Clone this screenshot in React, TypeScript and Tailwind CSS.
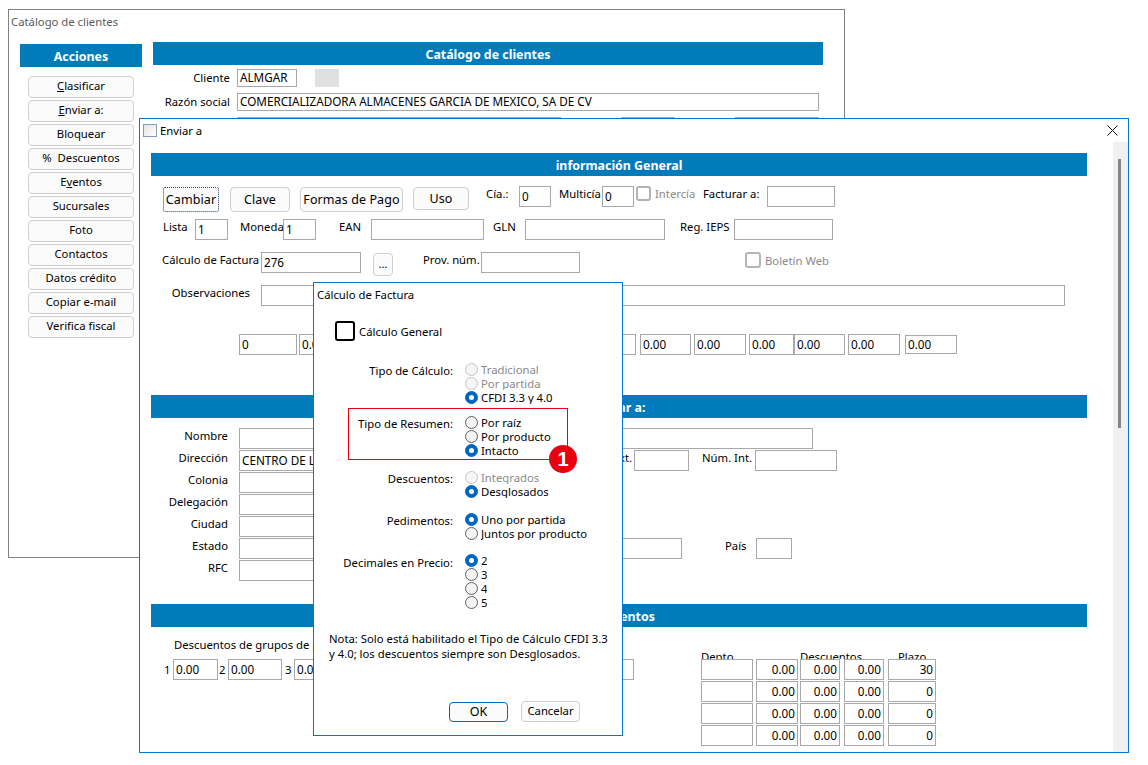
import React from "react";

function Field({ className = "", right, children }: { className?: string; right?: boolean; children?: React.ReactNode }) {
  return (
    <div
      className={`shrink-0 h-[21px] border border-[#a8a8a8] bg-white px-[2px] text-[11.7px] leading-[19px] whitespace-nowrap overflow-hidden ${right ? "text-right" : ""} ${className}`}
    >
      {children}
    </div>
  );
}

function Label({ className = "", children }: { className?: string; children: React.ReactNode }) {
  return <div className={`shrink-0 h-[16px] leading-[16px] whitespace-nowrap ${className}`}>{children}</div>;
}

function Bar({ children }: { children?: React.ReactNode }) {
  return (
    <div className="ml-[11px] w-[936px] h-[23px] overflow-hidden bg-[#027bbb] text-white font-bold text-[12.4px] leading-[25px] text-center">
      {children}
    </div>
  );
}

function WinBtn({ className = "", children }: { className?: string; children: React.ReactNode }) {
  return (
    <div
      className={`shrink-0 flex items-center justify-center rounded-[4px] border border-[#cfcfcf] bg-[#fbfbfb] whitespace-nowrap ${className}`}
    >
      {children}
    </div>
  );
}

function Check({ className = "" }: { className?: string }) {
  return <div className={`shrink-0 rounded-[3px] border-2 border-[#b4b4b4] bg-white ${className}`} />;
}

function Radio({ label, checked, disabled }: { label: string; checked?: boolean; disabled?: boolean }) {
  const ring = checked
    ? "bg-[#0067c0] border-[#0067c0]"
    : disabled
      ? "bg-[#f6f6f6] border-[#c4c4c4]"
      : "bg-[#f3f3f3] border-[#5f5f5f]";
  return (
    <div className="flex items-start h-[14px]">
      <div className={`shrink-0 flex items-center justify-center w-[13px] h-[13px] rounded-full border ${ring}`}>
        {checked && <div className="w-[5px] h-[5px] rounded-full bg-white" />}
      </div>
      <div className={`ml-[3px] h-[13px] leading-[13px] overflow-hidden whitespace-nowrap ${disabled ? "text-[#8a8a8a]" : ""}`}>
        {label}
      </div>
    </div>
  );
}

function RadioGroup({ title, className = "", labelClass = "", children }: { title: string; className?: string; labelClass?: string; children: React.ReactNode }) {
  return (
    <div className={`flex ${className}`}>
      <div className={`w-[140px] pr-[1px] text-right leading-[14px] ${labelClass}`}>{title}</div>
      <div className="ml-[11px]">{children}</div>
    </div>
  );
}

const actions: [string, string, string][] = [
  ["", "C", "lasificar"],
  ["", "E", "nviar a:"],
  ["Bloquear", "", ""],
  ["%  Descuentos", "", ""],
  ["E", "v", "entos"],
  ["Sucursales", "", ""],
  ["Foto", "", ""],
  ["Contactos", "", ""],
  ["Datos crédito", "", ""],
  ["Copiar e-mail", "", ""],
  ["Verifica fiscal", "", ""],
];

function BackWindow() {
  return (
    <div className="absolute left-[8px] top-[9px] w-[837px] h-[549px] border border-[#808080] bg-white">
      <div className="h-[24px] pl-[2px] leading-[24px] text-[#5a5a5a]">Catálogo de clientes</div>
      <div className="mt-[8px] ml-[11px] flex">
        <div className="mt-[2px] w-[122px]">
          <div className="h-[23px] overflow-hidden bg-[#027bbb] text-white font-bold text-[12.4px] leading-[25px] text-center">Acciones</div>
          <div className="mt-[9px] mx-[8px] flex flex-col gap-[2px]">
            {actions.map(([a, u, b]) => (
              <WinBtn key={a + u + b} className="h-[22px] pb-[1px]">
                <span className="whitespace-pre">
                  {a}
                  {u && <span className="underline">{u}</span>}
                  {b}
                </span>
              </WinBtn>
            ))}
          </div>
        </div>
        <div className="ml-[11px] w-[670px]">
          <div className="h-[23px] overflow-hidden bg-[#027bbb] text-white font-bold text-[12.4px] leading-[25px] text-center">Catálogo de clientes</div>
          <div className="mt-[4px] flex items-center">
            <div className="w-[77px] text-right">Cliente</div>
            <Field className="ml-[7px] w-[60px] !h-[18px] !leading-[15px]">ALMGAR</Field>
            <div className="ml-[18px] w-[24px] h-[18px] bg-[#e0e0e0]" />
          </div>
          <div className="mt-[6px] flex items-center">
            <div className="w-[77px] text-right">Razón social</div>
            <Field className="ml-[7px] w-[582px] !h-[18px] !leading-[15px]">COMERCIALIZADORA ALMACENES GARCIA DE MEXICO, SA DE CV</Field>
          </div>
          <div className="mt-[6px] ml-[84px] flex">
            <Field className="w-[324px] !h-[18px]" />
            <Field className="ml-[60px] w-[54px] !h-[18px]" />
            <Field className="ml-[60px] w-[84px] !h-[18px]" />
          </div>
        </div>
      </div>
    </div>
  );
}

function FrontWindow() {
  const fiscal = ["Nombre", "Dirección", "Colonia", "Delegación", "Ciudad", "Estado", "RFC"];
  return (
    <div className="absolute left-[139px] top-[118px] w-[990px] h-[635px] border border-[#0078d4] bg-white flex flex-col">
      <div className="h-[23px] shrink-0 flex items-center pl-[3px]">
        <div className="w-[14px] h-[13px] border border-[#7f9db9] bg-gradient-to-br from-[#e4e4e4] to-white" />
        <div className="ml-[3px] mt-[1px]">Enviar a</div>
        <svg className="ml-auto mr-[10px] -mt-[1px]" width="11" height="11" viewBox="0 0 11 11" fill="none" stroke="#111" strokeWidth="1">
          <path d="M0.5 0.5L10.5 10.5M10.5 0.5L0.5 10.5" />
        </svg>
      </div>
      <div className="flex flex-1 min-h-0">
        <div className="w-[973px] overflow-hidden">
          <div className="mt-[11px]">
            <Bar>información General</Bar>
          </div>

          {/* datos generales */}
          <div className="mt-[10px] h-[26px] pl-[23px] flex items-start">
            <WinBtn className="mt-[1px] pt-[1px] w-[56px] h-[25px] !rounded-[2px] !border-dotted !border-[#1f3f7f] text-[12.5px] tracking-[0.1px]">Cambiar</WinBtn>
            <WinBtn className="mt-[1px] pt-[1px] ml-[11px] w-[60px] h-[25px] text-[12.5px] tracking-[0.1px]">Clave</WinBtn>
            <WinBtn className="mt-[1px] pt-[1px] ml-[10px] w-[103px] h-[25px] text-[12.5px] tracking-[0.1px]">Formas de Pago</WinBtn>
            <WinBtn className="mt-[1px] pt-[1px] ml-[10px] w-[56px] h-[23px] text-[12.5px] tracking-[0.1px]">Uso</WinBtn>
            <Label className="ml-[17px] w-[33px]">Cía.:</Label>
            <Field className="w-[32px]">0</Field>
            <Label className="ml-[8px] w-[43px]">Multicía</Label>
            <Field className="w-[32px]">0</Field>
            <Check className="ml-[2px] w-[15px] h-[15px]" />
            <Label className="ml-[4px] w-[48px] text-[#8a8a8a]">Intercía</Label>
            <Label className="w-[64px]">Facturar a:</Label>
            <Field className="w-[68px]" />
          </div>
          <div className="mt-[7px] pl-[23px] flex items-start">
            <Label className="w-[32px]">Lista</Label>
            <Field className="w-[33px]">1</Field>
            <Label className="ml-[12px] w-[43px]">Moneda</Label>
            <Field className="w-[33px]">1</Field>
            <Label className="ml-[23px] w-[32px]">EAN</Label>
            <Field className="w-[113px]" />
            <Label className="ml-[9px] w-[32px]">GLN</Label>
            <Field className="w-[140px]" />
            <Label className="ml-[15px] w-[54px]">Reg. IEPS</Label>
            <Field className="w-[99px]" />
          </div>
          <div className="mt-[12px] h-[24px] pl-[22px] flex items-start">
            <Label className="w-[99px]">Cálculo de Factura</Label>
            <Field className="w-[100px]">276</Field>
            <WinBtn className="mt-[1px] ml-[12px] w-[20px] h-[23px] text-[11px]">...</WinBtn>
            <Label className="ml-[30px] w-[58px]">Prov. núm.</Label>
            <Field className="w-[99px]" />
            <Check className="ml-[165px] w-[16px] h-[16px]" />
            <Label className="mt-[1px] ml-[4px] text-[#8a8a8a]">Boletín Web</Label>
          </div>
          <div className="mt-[9px] flex items-start">
            <Label className="w-[110px] text-right">Observaciones</Label>
            <Field className="ml-[11px] w-[804px]" />
          </div>
          <div className="mt-[28px] pl-[99px] flex items-center">
            <Field className="w-[58px]">0</Field>
            <Field className="ml-[2px] w-[337px]">0.00</Field>
            <Field className="ml-[4px] w-[51px]">0.00</Field>
            <Field className="ml-[3px] w-[52px]">0.00</Field>
            <Field className="ml-[3px] w-[45px]">0.00</Field>
            <Field className="w-[51px]">0.00</Field>
            <Field className="ml-[3px] w-[52px]">0.00</Field>
            <Field className="ml-[5px] w-[52px] !h-[19px] !leading-[17px]">0.00</Field>
          </div>

          <div className="mt-[40px]">
            <Bar>Enviar a:</Bar>
          </div>

          {/* dirección */}
          <div className="mt-[10px] flex flex-col gap-[1px]">
            {fiscal.map((name) => (
              <div key={name} className="flex items-start">
                <Label className="w-[88px] text-right">{name}</Label>
                {name === "Nombre" && <Field className="ml-[11px] w-[574px]" />}
                {name === "Dirección" && (
                  <>
                    <Field className="ml-[11px] w-[330px]">CENTRO DE LOGISTICA</Field>
                    <Label className="w-[65px] pr-[2px] text-right">Núm. Ext.</Label>
                    <Field className="w-[55px]" />
                    <Label className="ml-[13px] w-[53px]">Núm. Int.</Label>
                    <Field className="w-[82px]" />
                  </>
                )}
                {name === "Estado" && (
                  <>
                    <Field className="ml-[11px] w-[443px]" />
                    <Label className="ml-[43px] w-[31px]">País</Label>
                    <Field className="w-[36px]" />
                  </>
                )}
                {name !== "Nombre" && name !== "Dirección" && name !== "Estado" && <Field className="ml-[11px] w-[250px]" />}
              </div>
            ))}
          </div>

          <div className="mt-[23px]">
            <Bar>Descuentos</Bar>
          </div>

          {/* descuentos */}
          <div className="flex">
            <div className="ml-[24px] w-[537px]">
              <Label className="mt-[10px] ml-[10px]">Descuentos de grupos de precio</Label>
              <div className="mt-[6px] flex items-center">
                <Label className="w-[9px]">1</Label>
                <Field className="w-[45px]">0.00</Field>
                <Label className="w-[10px] pl-[1px]">2</Label>
                <Field className="w-[54px]">0.00</Field>
                <Label className="w-[12px] pl-[3px]">3</Label>
                <Field className="w-[340px]">0.00</Field>
              </div>
            </div>
            <div className="mt-[22px]">
              <div className="h-[10px] flex overflow-hidden">
                <div className="w-[99px]">Depto</div>
                <div className="w-[98px]">Descuentos</div>
                <div>Plazo</div>
              </div>
              <div className="flex flex-col gap-[1px]">
                {["30", "0", "0", "0"].map((plazo, i) => (
                  <div key={i} className="flex">
                    <Field className="w-[52px]" />
                    <Field right className="ml-[3px] w-[42px]">0.00</Field>
                    <Field right className="ml-[2px] w-[40px]">0.00</Field>
                    <Field right className="ml-[4px] w-[40px]">0.00</Field>
                    <Field right className="ml-[4px] w-[48px]">{plazo}</Field>
                  </div>
                ))}
              </div>
            </div>
          </div>
        </div>
        <div className="w-[15px] bg-[#f0f0f0] pt-[17px] pl-[5px]">
          <div className="w-[3px] h-[269px] bg-[#858585]" />
        </div>
      </div>
    </div>
  );
}

function Dialog() {
  return (
    <div className="absolute left-[313px] top-[282px] w-[310px] h-[454px] border border-[#0078d4] bg-white">
      <div className="h-[24px] pl-[3px] leading-[24px]">Cálculo de Factura</div>
      <div className="mt-[14px] pl-[21px] flex items-center">
        <div className="w-[20px] h-[20px] rounded-[3px] border-2 border-black" />
        <div className="ml-[4px] mt-[2px]">Cálculo General</div>
      </div>
      <RadioGroup title="Tipo de Cálculo:" className="mt-[22px]" labelClass="mt-[1px]">
        <Radio label="Tradicional" disabled />
        <Radio label="Por partida" disabled />
        <Radio label="CFDI 3.3 y 4.0" checked />
      </RadioGroup>
      <RadioGroup title="Tipo de Resumen:" className="mt-[11px]" labelClass="mt-[1px]">
        <Radio label="Por raíz" />
        <Radio label="Por producto" />
        <Radio label="Intacto" checked />
      </RadioGroup>
      <RadioGroup title="Descuentos:" className="mt-[13px]" labelClass="mt-[1px]">
        <Radio label="Integrados" disabled />
        <Radio label="Desglosados" checked />
      </RadioGroup>
      <RadioGroup title="Pedimentos:" className="mt-[14px]" labelClass="mt-[1px]">
        <Radio label="Uno por partida" checked />
        <Radio label="Juntos por producto" />
      </RadioGroup>
      <RadioGroup title="Decimales en Precio:" className="mt-[13px]" labelClass="mt-[2px]">
        <Radio label="2" checked />
        <Radio label="3" />
        <Radio label="4" />
        <Radio label="5" />
      </RadioGroup>
      <div className="mt-[21px] ml-[15px] w-[285px] leading-[15px]">
        Nota: Solo está habilitado el Tipo de Cálculo CFDI 3.3
        <br />y 4.0; los descuentos siempre son Desglosados.
      </div>
      <div className="mt-[41px] ml-[135px] flex items-start">
        <WinBtn className="w-[59px] h-[20px] !border-[#0067c0] text-[12.5px]">OK</WinBtn>
        <WinBtn className="-mt-[1px] ml-[13px] w-[59px] h-[21px]">Cancelar</WinBtn>
      </div>
    </div>
  );
}

export default function App() {
  return (
    <div className="relative w-[1148px] h-[765px] overflow-hidden bg-white text-black text-[11.3px] font-['Noto_Sans',sans-serif]">
      <BackWindow />
      <FrontWindow />
      <Dialog />
      {/* marca roja sobre la captura */}
      <div className="absolute left-[348px] top-[408px] w-[220px] h-[52px] border border-[#e8000f]" />
      <div className="absolute left-[549px] top-[445px] w-[28px] h-[28px] rounded-full bg-[#e8000f] flex items-center justify-center text-white font-bold text-[20px] font-['Liberation_Sans',sans-serif]">
        1
      </div>
    </div>
  );
}
